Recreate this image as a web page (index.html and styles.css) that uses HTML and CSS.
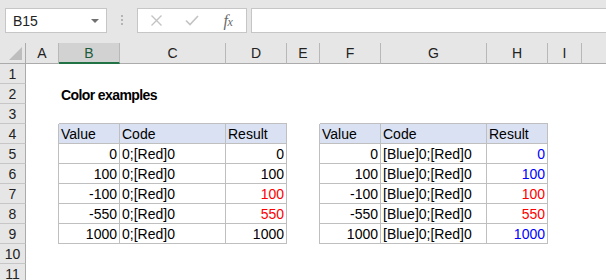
FILE: index.html
```html
<!DOCTYPE html>
<html lang="en">

<head>
     <meta charset="UTF-8" />
     <title>Color examples</title>
     <link rel="stylesheet" href="styles.css">
</head>

<body>

     <div class="toolbar">
          <div class="namebox">
               <span>B15</span>
               <span class="drop"></span>
          </div>
          <div class="grip"><i></i><i></i><i></i></div>
          <div class="fxbox">
               <svg width="13" height="11" viewBox="0 0 13 11"><path d="M1.5 0.5 L11.5 10.5 M11.5 0.5 L1.5 10.5" stroke="#c3c3c3" stroke-width="1.4" fill="none" /></svg>
               <svg width="14" height="11" viewBox="0 0 14 11"><path d="M1 5.5 L5 9.5 L13 1" stroke="#c3c3c3" stroke-width="1.6" fill="none" /></svg>
               <span class="fx"><i>f</i><i class="x">x</i></span>
          </div>
          <div class="formula"></div>
     </div>

     <div class="colhead">
          <div class="corner"><svg width="13" height="13" viewBox="0 0 13 13"><polygon points="13,0 13,13 0,13" fill="#bdbdbd" /></svg></div>
          <div>A</div>
          <div class="sel">B</div>
          <div>C</div>
          <div>D</div>
          <div>E</div>
          <div>F</div>
          <div>G</div>
          <div>H</div>
          <div>I</div>
          <div class="last"></div>
     </div>

     <div class="row">
          <div class="rh">1</div>
     </div>
     <div class="row">
          <div class="rh">2</div>
          <div class="c"></div>
          <div class="c title">Color examples</div>
     </div>
     <div class="row">
          <div class="rh">3</div>
          <div class="c"></div>
          <div class="c above"></div>
          <div class="c above"></div>
          <div class="c above"></div>
          <div class="c"></div>
          <div class="c above"></div>
          <div class="c above"></div>
          <div class="c above"></div>
     </div>
     <div class="row">
          <div class="rh">4</div>
          <div class="c edge"></div>
          <div class="c t th">Value</div>
          <div class="c t th">Code</div>
          <div class="c t th">Result</div>
          <div class="c edge"></div>
          <div class="c t th">Value</div>
          <div class="c t th">Code</div>
          <div class="c t th">Result</div>
     </div>
     <div class="row">
          <div class="rh">5</div>
          <div class="c edge"></div>
          <div class="c t num">0</div>
          <div class="c t">0;[Red]0</div>
          <div class="c t num">0</div>
          <div class="c edge"></div>
          <div class="c t num">0</div>
          <div class="c t">[Blue]0;[Red]0</div>
          <div class="c t num blue">0</div>
     </div>
     <div class="row">
          <div class="rh">6</div>
          <div class="c edge"></div>
          <div class="c t num">100</div>
          <div class="c t">0;[Red]0</div>
          <div class="c t num">100</div>
          <div class="c edge"></div>
          <div class="c t num">100</div>
          <div class="c t">[Blue]0;[Red]0</div>
          <div class="c t num blue">100</div>
     </div>
     <div class="row">
          <div class="rh">7</div>
          <div class="c edge"></div>
          <div class="c t num">-100</div>
          <div class="c t">0;[Red]0</div>
          <div class="c t num red">100</div>
          <div class="c edge"></div>
          <div class="c t num">-100</div>
          <div class="c t">[Blue]0;[Red]0</div>
          <div class="c t num red">100</div>
     </div>
     <div class="row">
          <div class="rh">8</div>
          <div class="c edge"></div>
          <div class="c t num">-550</div>
          <div class="c t">0;[Red]0</div>
          <div class="c t num red">550</div>
          <div class="c edge"></div>
          <div class="c t num">-550</div>
          <div class="c t">[Blue]0;[Red]0</div>
          <div class="c t num red">550</div>
     </div>
     <div class="row">
          <div class="rh">9</div>
          <div class="c edge"></div>
          <div class="c t num">1000</div>
          <div class="c t">0;[Red]0</div>
          <div class="c t num">1000</div>
          <div class="c edge"></div>
          <div class="c t num">1000</div>
          <div class="c t">[Blue]0;[Red]0</div>
          <div class="c t num blue">1000</div>
     </div>
     <div class="row">
          <div class="rh">10</div>
     </div>
     <div class="row">
          <div class="rh">11</div>
     </div>

</body>

</html>
```

FILE: styles.css
```css
:root {
     --cols: 26px 33px 61px 106px 61px 33px 61px 106px 61px 34px 1fr;
     --bar: #e6e6e6;
     --line: #bfbfbf;
     --head-line: #ababab;
     --green: #217346;
}

* {
     box-sizing: border-box;
     margin: 0;
     padding: 0;
}

body {
     font-family: "Liberation Sans", Arial, sans-serif;
     font-size: 14px;
     color: #000;
     background: #fff;
     width: 606px;
     height: 280px;
     overflow: hidden;
}

/* formula bar */
.toolbar {
     height: 43px;
     background: var(--bar);
     display: flex;
     align-items: flex-start;
     padding: 8px 0 0 5px;
}

.namebox {
     width: 102px;
     height: 25px;
     background: #fff;
     border: 1px solid #c6c6c6;
     display: flex;
     align-items: center;
     justify-content: space-between;
     padding: 0 7px 0 7px;
     color: #222;
}

.drop {
     width: 0;
     height: 0;
     border-left: 4px solid transparent;
     border-right: 4px solid transparent;
     border-top: 4px solid #707070;
}

.grip {
     width: 30px;
     display: flex;
     flex-direction: column;
     align-items: center;
     gap: 2px;
     padding-top: 7px;
}

.grip i {
     width: 2px;
     height: 2px;
     background: #b4b4b4;
}

.fxbox {
     width: 110px;
     height: 25px;
     background: #fff;
     border: 1px solid #c6c6c6;
     display: grid;
     grid-template-columns: 1fr 1fr 1fr;
     align-items: center;
     justify-items: center;
}

.fx {
     font-family: "Liberation Serif", serif;
     font-size: 16px;
     color: #6a6a6a;
     letter-spacing: -0.5px;
}

.fx .x {
     font-size: 12px;
}

.formula {
     flex: 1;
     height: 25px;
     margin-left: 4px;
     background: #fff;
     border: 1px solid #c6c6c6;
     border-right: none;
}

/* column letters */
.colhead {
     display: grid;
     grid-template-columns: var(--cols);
     height: 21px;
     background: var(--bar);
}

.colhead div {
     display: flex;
     align-items: center;
     justify-content: center;
     border-right: 1px solid #b8b8b8;
     border-bottom: 1px solid var(--head-line);
     color: #222;
}

.colhead .corner {
     border-right-color: var(--head-line);
     justify-content: flex-end;
     align-items: flex-end;
     padding: 0 3px 3px 0;
}

.colhead .sel {
     background: #d2d2d2;
     color: #1e5b3a;
     border-bottom: 2px solid var(--green);
}

.colhead .last {
     border-right: none;
}

/* sheet rows */
.row {
     display: grid;
     grid-template-columns: var(--cols);
     height: 20px;
}

.rh {
     background: var(--bar);
     border-right: 1px solid var(--head-line);
     border-bottom: 1px solid #c6c6c6;
     display: flex;
     align-items: center;
     justify-content: center;
     color: #222;
}

.c {
     padding: 1px 2px 0 2px;
     line-height: 18px;
     white-space: nowrap;
}

.title {
     font-weight: bold;
     letter-spacing: -0.6px;
     overflow: visible;
     padding-top: 2px;
}

.above {
     border-bottom: 1px solid var(--line);
}

.edge {
     border-right: 1px solid var(--line);
}

.t {
     border-right: 1px solid var(--line);
     border-bottom: 1px solid var(--line);
}

.th {
     background: #d9e1f2;
}

.num {
     text-align: right;
}

.red {
     color: #ff0000;
}

.blue {
     color: #0000ff;
}
```
